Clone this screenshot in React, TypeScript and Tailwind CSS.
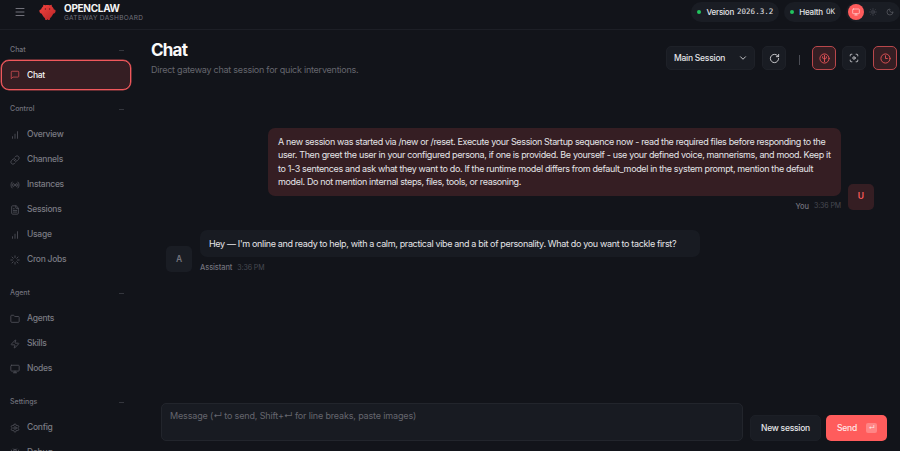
import type { ReactNode } from "react";
import {
  Bug, ChevronDown, FileText, Folder, Link, Loader, Menu,
  Monitor, Moon, Radio, RotateCw, Settings, Sun, Zap,
} from "lucide-react";
import type { LucideIcon } from "lucide-react";

type NavItem = { label: string; icon: LucideIcon | typeof BarsIcon; active?: boolean };
type NavGroup = { title: string; items: NavItem[] };

function BarsIcon({ className }: { className?: string }) {
  return (
    <svg viewBox="0 0 24 24" fill="none" stroke="currentColor" strokeWidth={2} strokeLinecap="round" className={className}>
      <path d="M6 20v-4M12 20V10M18 20V4" />
    </svg>
  );
}

function BubbleIcon({ className }: { className?: string }) {
  return (
    <svg viewBox="0 0 24 24" fill="none" stroke="currentColor" strokeWidth={2} strokeLinejoin="round" className={className}>
      <path d="M21 15a2 2 0 0 1-2 2H7l-4 4V5a2 2 0 0 1 2-2h14a2 2 0 0 1 2 2z" />
    </svg>
  );
}

const NAV: NavGroup[] = [
  { title: "Chat", items: [{ label: "Chat", icon: BubbleIcon, active: true }] },
  {
    title: "Control",
    items: [
      { label: "Overview", icon: BarsIcon },
      { label: "Channels", icon: Link },
      { label: "Instances", icon: Radio },
      { label: "Sessions", icon: FileText },
      { label: "Usage", icon: BarsIcon },
      { label: "Cron Jobs", icon: Loader },
    ],
  },
  {
    title: "Agent",
    items: [
      { label: "Agents", icon: Folder },
      { label: "Skills", icon: Zap },
      { label: "Nodes", icon: Monitor },
    ],
  },
  {
    title: "Settings",
    items: [
      { label: "Config", icon: Settings },
      { label: "Debug", icon: Bug },
    ],
  },
];

function Logo() {
  return (
    <svg viewBox="0 0 32 32" className="h-[17px] w-[17px] shrink-0">
      <defs>
        <linearGradient id="claw" x1="0" y1="0" x2="1" y2="1">
          <stop offset="0" stopColor="#f5443f" />
          <stop offset="1" stopColor="#b82527" />
        </linearGradient>
      </defs>
      <path
        d="M8 1.5l4 1c2.500-.8 5.500-.8 8 0l4-1L24 4c2 1.500 3.400 3.800 4 6.300 2.300-.3 3.500 1.200 3.200 3.200-.3 2.700-2.200 4.500-4.500 4.800-1.200 3.200-3.200 6-5.700 8l-1 4h-3l-1-2-1 2h-3l-1-4c-2.500-2-4.500-4.800-5.700-8C3 18 1.100 16.200.8 13.500.5 11.500 1.700 10 4 10.300 4.600 7.800 6 5.500 8 4z"
        fill="url(#claw)"
      />
      <circle cx="12" cy="9.500" r="1.300" fill="#6b1a1c" />
      <circle cx="20" cy="9.500" r="1.300" fill="#6b1a1c" />
    </svg>
  );
}

function Pill({ label, value }: { label: string; value: string }) {
  return (
    <div className="flex h-5 items-center rounded-full bg-[#1a1d24] px-[6px] text-[8px] text-[#e4e4e7]">
      <span className="mr-[5px] h-1 w-1 rounded-full bg-[#22c55e]" />
      <span className="font-medium tracking-[-0.2px]">{label}</span>
      <span className="ml-[3px] font-['DejaVu_Sans_Mono',monospace] text-[7.5px]">{value}</span>
    </div>
  );
}

function SquareButton({ active, children }: { active?: boolean; children: ReactNode }) {
  return (
    <button
      className={`flex h-6 w-6 items-center justify-center rounded-[5px] border ${
        active ? "border-[#b9474b] bg-[#351e23] text-[#e55358]" : "border-[#1e2128] bg-[#191c23] text-[#d4d4d8]"
      }`}
    >
      {children}
    </button>
  );
}

function Sidebar() {
  return (
    <nav className="flex w-[132px] shrink-0 flex-col overflow-hidden pl-px pt-3">
      {NAV.map((group) => (
        <div key={group.title} className={`shrink-0 ${group.items[0].active ? "mb-[11px]" : "mb-[13px]"}`}>
          <div className="flex h-[17px] items-center justify-between pl-[9px] pr-2 text-[7px] font-medium text-[#71717a]">
            <span>{group.title}</span>
            <span className="h-px w-[5px] bg-[#34363d]" />
          </div>
          <div className={group.items[0].active ? "mt-px" : "mt-[4px]"}>
            {group.items.map(({ label, icon: Icon, active }) => (
              <div
                key={label}
                className={`flex items-center gap-[7px] text-[8.5px] font-medium tracking-[-0.27px] ${
                  active
                    ? "h-[30px] w-[130px] rounded-[8px] border border-[#f0585c] bg-[#351e23] pl-[8px] text-[#f4f4f5] shadow-[0_0_0_0.5px_#b9474b]"
                    : "h-[25px] pl-[9px] text-[#7a7b83]"
                }`}
              >
                <Icon className={`h-[10px] w-[10px] shrink-0 ${active ? "text-[#c84c50]" : "text-[#50525a]"}`} />
                {label}
              </div>
            ))}
          </div>
        </div>
      ))}
    </nav>
  );
}

export default function App() {
  return (
    <div className="flex h-[451px] w-[900px] flex-col overflow-hidden bg-[#12141a] font-['Inter',sans-serif] text-[#e4e4e7]">
      {/* Topbar */}
      <header className="flex h-[30px] shrink-0 items-start justify-between border-b border-[#1d1f26] pl-[14px]">
        <div className="flex items-center pt-[2px]">
          <Menu className="h-3 w-3 text-[#71717a]" />
          <div className="ml-[13px]"><Logo /></div>
          <div className="ml-[8px] flex flex-col">
            <span className="text-[10px] font-bold leading-[12px] tracking-[-0.3px] text-[#f4f4f5]">OPENCLAW</span>
            <span className="mt-px text-[6.5px] leading-[7px] tracking-[0.35px] text-[#71717a]">GATEWAY DASHBOARD</span>
          </div>
        </div>
        <div className="flex items-center gap-[5px] pt-[2px]">
          <Pill label="Version" value="2026.3.2" />
          <Pill label="Health" value="OK" />
          <div className="flex h-5 w-[54px] items-center rounded-full bg-[#1a1d24] pl-[2px]">
            <span className="flex h-4 w-4 items-center justify-center rounded-full bg-[#ff5c5c] text-[#ffd9d9]">
              <Monitor className="h-2 w-2" />
            </span>
            <Sun className="ml-[5px] h-2 w-2 text-[#50525a]" />
            <Moon className="ml-[9px] h-2 w-2 text-[#62636b]" />
          </div>
        </div>
      </header>

      <div className="flex min-h-0 flex-1">
        <Sidebar />

        <main className="flex min-w-0 flex-1 flex-col">
          {/* Page header */}
          <div className="flex items-start justify-between pl-[19px] pr-[3px]">
            <div className="pt-[10px]">
              <h1 className="text-[17px] font-bold leading-[20px] tracking-[-0.8px] text-[#fafafa]">Chat</h1>
              <p className="mt-1 text-[9px] leading-[12px] tracking-[-0.24px] text-[#65666e]">
                Direct gateway chat session for quick interventions.
              </p>
            </div>
            <div className="flex items-center pt-[16px]">
              <div className="mr-[7px] flex h-6 w-[89px] items-center justify-between rounded-[5px] border border-[#1e2128] bg-[#191c23] pl-[7px] pr-[6px] text-[8.5px] font-medium tracking-[-0.25px]">
                Main Session
                <ChevronDown className="h-[10px] w-[10px]" />
              </div>
              <SquareButton><RotateCw className="h-[11px] w-[11px]" /></SquareButton>
              <span className="ml-[13px] mr-[12px] mt-1 h-[10px] w-px bg-[#4a4c54]" />
              <SquareButton active>
                <svg viewBox="0 0 24 24" fill="none" stroke="currentColor" strokeWidth={2} strokeLinecap="round" className="h-[11px] w-[11px]">
                  <circle cx="12" cy="12" r="10" />
                  <path d="M12 5v14M8 8v3c0 1 1.500 1.500 4 1.500M16 8v3c0 1-1.500 1.500-4 1.500" />
                </svg>
              </SquareButton>
              <span className="w-[6px]" />
              <SquareButton>
                <svg viewBox="0 0 24 24" fill="none" stroke="currentColor" strokeWidth={2} strokeLinecap="round" className="h-[10px] w-[10px]">
                  <path d="M3 7V5a2 2 0 0 1 2-2h2M17 3h2a2 2 0 0 1 2 2v2M21 17v2a2 2 0 0 1-2 2h-2M7 21H5a2 2 0 0 1-2-2v-2" />
                  <circle cx="12" cy="12" r="3" />
                </svg>
              </SquareButton>
              <span className="w-[7px]" />
              <SquareButton active>
                <svg viewBox="0 0 24 24" fill="none" stroke="currentColor" strokeWidth={2} strokeLinecap="round" strokeLinejoin="round" className="h-[11px] w-[11px]">
                  <circle cx="12" cy="12" r="10" />
                  <path d="M12 6v6h4" />
                </svg>
              </SquareButton>
            </div>
          </div>

          {/* Thread */}
          <div className="flex min-h-0 flex-1 flex-col pl-[34px] pr-[26px] pt-[52px]">
            <div className="flex items-end justify-end gap-[7px]">
              <div className="flex flex-col items-end">
                <div className="w-[573px] whitespace-nowrap rounded-[7px] bg-[#351e23] px-[10px] py-[7px] text-[9px] leading-[13.4px] tracking-[-0.35px]">
                  <p>A new session was started via /new or /reset. Execute your Session Startup sequence now - read the required files before responding to the</p>
                  <p>user. Then greet the user in your configured persona, if one is provided. Be yourself - use your defined voice, mannerisms, and mood. Keep it</p>
                  <p>to 1-3 sentences and ask what they want to do. If the runtime model differs from default_model in the system prompt, mention the default</p>
                  <p>model. Do not mention internal steps, files, tools, or reasoning.</p>
                </div>
                <div className="mt-[6px] flex h-[10px] items-center gap-[5px] text-[7.5px] font-medium tracking-[-0.1px] text-[#71717a]">
                  You <span className="text-[7px] font-normal text-[#484a52]">3:36 PM</span>
                </div>
              </div>
              <div className="mb-[2px] flex h-[26px] w-[26px] items-center justify-center rounded-[5px] bg-[#351e23] text-[8.5px] font-semibold text-[#ff5c5c]">U</div>
            </div>

            <div className="mt-[18px] flex items-end gap-2">
              <div className="mb-[1px] flex h-[26px] w-[26px] items-center justify-center rounded-[5px] bg-[#1a1d24] text-[8.5px] font-semibold text-[#71717a]">A</div>
              <div>
                <div className="w-[500px] whitespace-nowrap rounded-[7px] bg-[#181b22] px-[9px] py-[7px] text-[9px] leading-[13.4px] tracking-[-0.34px]">
                  Hey — I'm online and ready to help, with a calm, practical vibe and a bit of personality. What do you want to tackle first?
                </div>
                <div className="mt-[6px] flex h-[10px] items-center gap-[5px] text-[7.5px] font-medium tracking-[-0.1px] text-[#71717a]">
                  Assistant <span className="text-[7px] font-normal text-[#484a52]">3:36 PM</span>
                </div>
              </div>
            </div>
          </div>

          {/* Composer */}
          <div className="flex shrink-0 items-end pb-[10px] pl-[29px] pr-[13px]">
            <div className="h-[38px] w-[582px] rounded-[5px] border border-[#22252c] bg-[#181b22] px-2 pt-[5px] text-[9px] leading-[14px] tracking-[-0.15px] text-[#65666e]">
              Message (↵ to send, Shift+↵ for line breaks, paste images)
            </div>
            <button className="ml-[7px] h-[26px] w-[71px] rounded-[5px] border border-[#1c1f26] bg-[#191c23] text-[8.5px] font-medium tracking-[-0.25px]">
              New session
            </button>
            <button className="ml-[5px] flex h-[26px] w-[61px] items-center rounded-[5px] bg-[#ff5c5c] pl-[11px] text-[8.5px] font-medium tracking-[-0.2px] text-[#ffe9e9]">
              Send
              <span className="ml-[9px] flex h-[10px] w-[11px] items-center justify-center rounded-[2px] bg-[#ff8585] text-[6px] leading-none">↵</span>
            </button>
          </div>
        </main>
      </div>
    </div>
  );
}
